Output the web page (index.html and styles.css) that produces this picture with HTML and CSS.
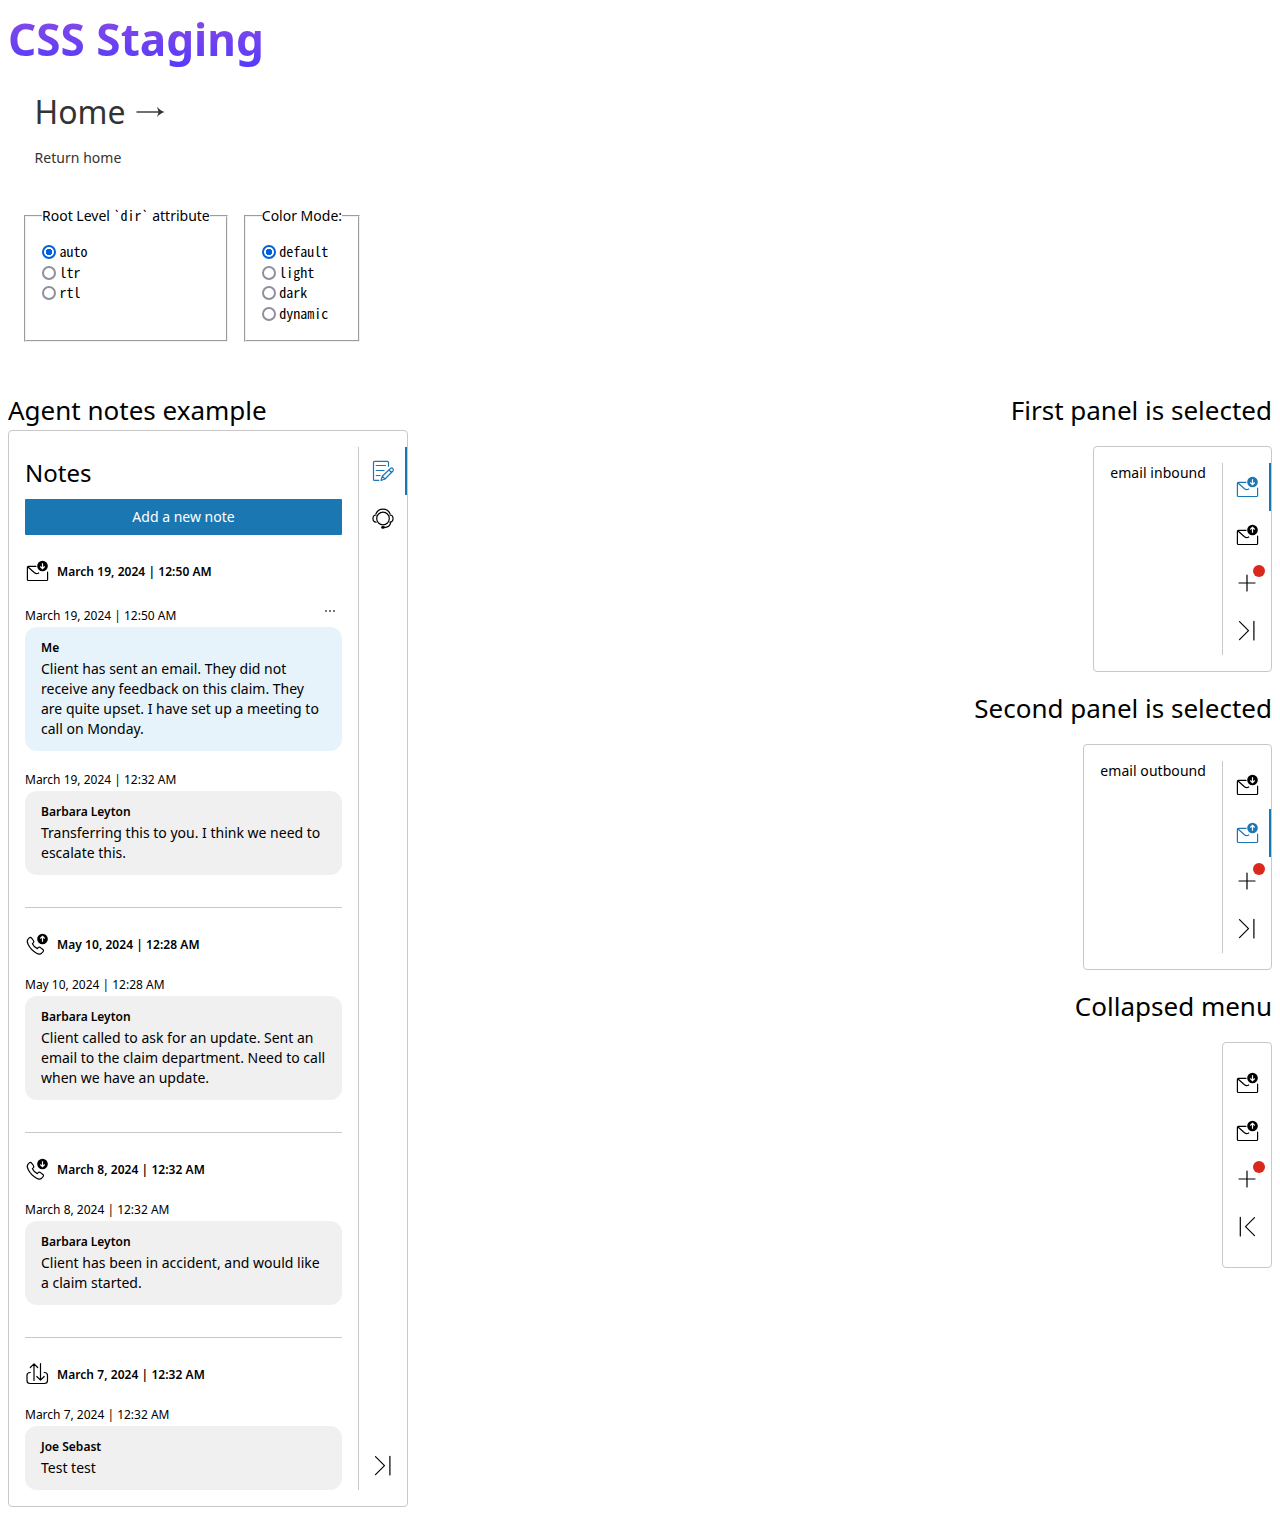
FILE: index.html
```html
<!DOCTYPE html>
<html lang="en">
<head>
<meta charset="utf-8">
<title>CSS Staging</title>
<link rel="stylesheet" href="styles.css">
</head>
<body>
<svg class="sprite" aria-hidden="true">
  <symbol id="envelope" viewBox="0 0 24 24">
    <path class="line" d="M11 7.4H3.4a1 1 0 0 0-1 1v12.1a1 1 0 0 0 1 1h18.2a1 1 0 0 0 1-1V13.2M2.7 7.8l6.8 6c1.6 1.3 2.6 1.3 4.2.2"/>
  </symbol>
  <symbol id="phone" viewBox="0 0 24 24">
    <path class="line" d="M4.3 5.9 2.9 7.3c-1.2 1.5-.6 3.4.3 5.2 1.9 3.9 4.6 6.6 8.4 8.7 2 1.1 3.7 1.2 5 0l1.3-1.3c.9-.9.8-1.7 0-2.4l-2.4-1.9c-.8-.6-1.6-.6-2.3.1l-.9.9c-2.2-1-3.900-2.800-4.900-4.900l.9-.9c.7-.7.7-1.500.1-2.300L6.600 6.100c-.7-.9-1.500-1-2.300-.2z"/>
  </symbol>
  <symbol id="badge-down" viewBox="0 0 24 24">
    <circle cx="17.5" cy="7" r="5.3" class="solid"/>
    <path class="knock" d="M17.5 4.2v5.3M15.3 7.5l2.2 2.200 2.200-2.200"/>
  </symbol>
  <symbol id="badge-up" viewBox="0 0 24 24">
    <circle cx="17.5" cy="7" r="5.3" class="solid"/>
    <path class="knock" d="M17.5 9.8V4.5M15.3 6.500l2.200-2.200 2.200 2.200"/>
  </symbol>
  <symbol id="transfer" viewBox="0 0 24 24">
    <path class="line" d="M5.300 10.500H5a3 3 0 0 0-3 3v5a3 3 0 0 0 3 3h14.500a3 3 0 0 0 3-3v-5a3 3 0 0 0-3-3h-.3M9 18.500V2M5.300 5.500 9 1.800l3.700 3.700M15.500 1.500V18M11.800 14.500l3.700 3.700 3.700-3.700"/>
  </symbol>
  <symbol id="note" viewBox="0 0 24 24">
    <path class="line" d="M17.500 7.200V3.400a1 1 0 0 0-1-1h-13a1 1 0 0 0-1 1v17a1 1 0 0 0 1 1h4.200M5.200 6.500h9.300M5.200 11.500h7.800M5.200 16.500h3.800M10 21.500l1.200-4.200 8.300-7.800c.8-.7 1.700-.6 2.400.1.700.7.700 1.600 0 2.400l-7.900 8zM18 11l2.700 2.700M11.200 17.300l2.800 2.700"/>
  </symbol>
  <symbol id="headset" viewBox="0 0 24 24">
    <circle class="line" cx="12" cy="11.500" r="6.300"/>
    <path class="line" d="M4.900 6.800C6.300 3.800 8.800 2.200 12 2.200s5.700 1.600 7.100 4.600M5.100 8c-4.200.1-4.200 7 0 7.200M18.900 8c4.200.1 4.200 7 0 7.200M19.800 15.300c-.8 3.500-2.900 5.100-6.300 5.100"/>
    <ellipse cx="12" cy="20.400" rx="1.900" ry="1.300" class="solid"/>
  </symbol>
  <symbol id="plus" viewBox="0 0 24 24"><path class="line" d="M12 4v16M4 12h16"/></symbol>
  <symbol id="collapse" viewBox="0 0 24 24"><path class="line" d="m4.500 2.600 9 9-9 9M18.900 2.300v18.700"/></symbol>
  <symbol id="expand" viewBox="0 0 24 24"><path class="line" d="m19.500 2.600-9 9 9 9M5.300 2.300v18.700"/></symbol>
</svg>

<h1 class="title">CSS Staging</h1>
<a class="home" href="#"><span class="home-title">Home <svg class="arrow" viewBox="0 0 30 12"><path d="M1.500 6h25" stroke="currentColor" stroke-width="1.400"/><path d="M22 .8c1.700 2.300 4 4 7.500 5.200-3.500 1.200-5.800 2.900-7.500 5.200l1.600-5.200z" fill="currentColor"/></svg></span><span class="home-sub">Return home</span></a>

<form class="settings">
  <fieldset class="group">
    <legend>Root Level <code>`dir`</code> attribute</legend>
    <label><input type="radio" name="dir" checked><code>auto</code></label>
    <label><input type="radio" name="dir"><code>ltr</code></label>
    <label><input type="radio" name="dir"><code>rtl</code></label>
  </fieldset>
  <fieldset class="group">
    <legend>Color Mode:</legend>
    <label><input type="radio" name="mode" checked><code>default</code></label>
    <label><input type="radio" name="mode"><code>light</code></label>
    <label><input type="radio" name="mode"><code>dark</code></label>
    <label><input type="radio" name="mode"><code>dynamic</code></label>
  </fieldset>
</form>

<main class="examples">
  <section class="agent">
    <h2 class="heading">Agent notes example</h2>
    <div class="card">
      <div class="panel notes">
        <h3 class="notes-title">Notes</h3>
        <button class="add" type="button">Add a new note</button>

        <section class="thread">
          <div class="thread-head"><svg class="icon"><use href="#envelope"/><use href="#badge-down"/></svg><span>March 19, 2024 | 12:50 AM</span></div>
          <div class="meta"><span>March 19, 2024 | 12:50 AM</span><button class="more" type="button" aria-label="More"><i></i><i></i><i></i></button></div>
          <div class="bubble mine"><b>Me</b><p>Client has sent an email. They did not receive any feedback on this claim. They are quite upset. I have set up a meeting to call on Monday.</p></div>
          <div class="meta"><span>March 19, 2024 | 12:32 AM</span></div>
          <div class="bubble"><b>Barbara Leyton</b><p>Transferring this to you. I think we need to escalate this.</p></div>
        </section>

        <section class="thread">
          <div class="thread-head"><svg class="icon"><use href="#phone"/><use href="#badge-up"/></svg><span>May 10, 2024 | 12:28 AM</span></div>
          <div class="meta"><span>May 10, 2024 | 12:28 AM</span></div>
          <div class="bubble"><b>Barbara Leyton</b><p>Client called to ask for an update. Sent an email to the claim department. Need to call when we have an update.</p></div>
        </section>

        <section class="thread">
          <div class="thread-head"><svg class="icon"><use href="#phone"/><use href="#badge-down"/></svg><span>March 8, 2024 | 12:32 AM</span></div>
          <div class="meta"><span>March 8, 2024 | 12:32 AM</span></div>
          <div class="bubble"><b>Barbara Leyton</b><p>Client has been in accident, and would like a claim started.</p></div>
        </section>

        <section class="thread">
          <div class="thread-head"><svg class="icon"><use href="#transfer"/></svg><span>March 7, 2024 | 12:32 AM</span></div>
          <div class="meta"><span>March 7, 2024 | 12:32 AM</span></div>
          <div class="bubble"><b>Joe Sebast</b><p>Test test</p></div>
        </section>
      </div>
      <nav class="tabs">
        <a class="tab active"><svg class="icon"><use href="#note"/></svg></a>
        <a class="tab"><svg class="icon"><use href="#headset"/></svg></a>
        <a class="tab last"><svg class="icon"><use href="#collapse"/></svg></a>
      </nav>
    </div>
  </section>

  <section class="variants">
    <h2 class="heading">First panel is selected</h2>
    <div class="card">
      <div class="panel">email inbound</div>
      <nav class="tabs">
        <a class="tab active"><svg class="icon"><use href="#envelope"/><use href="#badge-down"/></svg></a>
        <a class="tab"><svg class="icon"><use href="#envelope"/><use href="#badge-up"/></svg></a>
        <a class="tab alert"><svg class="icon"><use href="#plus"/></svg></a>
        <a class="tab"><svg class="icon"><use href="#collapse"/></svg></a>
      </nav>
    </div>
    <h2 class="heading">Second panel is selected</h2>
    <div class="card">
      <div class="panel">email outbound</div>
      <nav class="tabs">
        <a class="tab"><svg class="icon"><use href="#envelope"/><use href="#badge-down"/></svg></a>
        <a class="tab active"><svg class="icon"><use href="#envelope"/><use href="#badge-up"/></svg></a>
        <a class="tab alert"><svg class="icon"><use href="#plus"/></svg></a>
        <a class="tab"><svg class="icon"><use href="#collapse"/></svg></a>
      </nav>
    </div>
    <h2 class="heading">Collapsed menu</h2>
    <div class="card">
      <nav class="tabs bare">
        <a class="tab"><svg class="icon"><use href="#envelope"/><use href="#badge-down"/></svg></a>
        <a class="tab"><svg class="icon"><use href="#envelope"/><use href="#badge-up"/></svg></a>
        <a class="tab alert"><svg class="icon"><use href="#plus"/></svg></a>
        <a class="tab"><svg class="icon"><use href="#expand"/></svg></a>
      </nav>
    </div>
  </section>
</main>
</body>
</html>
```
FILE: styles.css
```css
* { box-sizing: border-box; }
body {
  margin: 8px;
  font: 14px/20px "Noto Sans", sans-serif;
  color: #000;
  background: #fff;
}
h1, h2, h3, p { margin: 0; font-weight: 400; }
code { font-family: "Noto Sans Mono CJK SC", "Noto Sans Mono CJK JP", "Noto Sans Mono", monospace; font-size: 14px; }
.sprite { display: none; }

.title {
  width: max-content;
  height: 64px;
  font-size: 44.100px;
  font-weight: 700;
  line-height: 62px;
  background: linear-gradient(#8f4de0, #5038ff);
  background-clip: text;
  -webkit-background-clip: text;
  color: transparent;
}
.home {
  display: flex;
  flex-direction: column;
  width: max-content;
  margin: 16px 0 0 26.500px;
  color: #333;
  text-decoration: none;
}
.home-title { font-size: 32px; line-height: 48px; }
.arrow { width: 30px; height: 12px; margin-left: 1px; vertical-align: 6px; fill: none; }
.home-sub { margin-top: 12px; letter-spacing: .04px; }

.settings { display: flex; gap: 16px; margin: 38px 0 0 16px; height: 136px; }
.group {
  display: flex;
  flex-direction: column;
  margin: 0;
  padding: 16px;
  border: 2px groove #f0f0f0;
}
.group legend { padding: 0; }
.group legend code { line-height: 1; }
.group label { display: flex; align-items: center; height: 20.500px; }
.group label code { padding-bottom: 2px; }
.group input {
  appearance: none;
  width: 14px;
  height: 14px;
  margin: 0 3.500px 0 0;
  border: 2px solid #8f8f9d;
  border-radius: 50%;
}
.group input:checked {
  border-color: #0060df;
  background: radial-gradient(circle, #0060df 0 2.900px, #fff 3.500px);
}

.examples { display: flex; justify-content: space-between; margin-top: 48px; }
.heading { font-size: 26px; line-height: 40px; }
.agent { width: 400px; }
.variants { display: flex; flex-direction: column; align-items: flex-end; gap: 16px; }
.variants .panel { letter-spacing: .06px; }
.card {
  display: flex;
  padding: 16px 0;
  border: 1px solid #c8c8c8;
  border-radius: 4px;
}
.panel { padding: 0 16px; }
.notes { flex: 1; }
.tabs {
  display: flex;
  flex-direction: column;
  width: 49px;
  border-left: 1px solid #c8c8c8;
}
.tabs.bare { width: 48px; border-left: 0; }
.tab { position: relative; display: grid; place-items: center; height: 48px; }
.tab.active { color: #1b77b2; box-shadow: inset -2px 0 #1b77b2; }
.tab.last { margin-top: auto; }
.tab.alert::after {
  content: "";
  position: absolute;
  top: 6px;
  right: 6px;
  width: 12px;
  height: 12px;
  border-radius: 50%;
  background: #da291c;
}
.icon { display: block; flex: none; width: 24px; height: 24px; }
.line { fill: none; stroke: currentColor; stroke-width: 1.200; stroke-linecap: round; stroke-linejoin: round; }
.solid { fill: currentColor; }
.knock { fill: none; stroke: #fff; stroke-width: 1.200; }

.notes-title { font-size: 24px; line-height: 32px; padding: 10px 0; }
.add {
  display: block;
  width: 100%;
  height: 36px;
  border: 0;
  border-radius: 1px;
  background: #1b77b2;
  color: #fff;
  font: inherit;
}
.thread { padding-top: 24px; }
.thread + .thread { margin-top: 32px; border-top: 1px solid #c8c8c8; }
.thread-head {
  display: flex;
  align-items: center;
  gap: 8px;
  height: 24px;
  font-size: 12px;
  font-weight: 600;
  letter-spacing: .05px;
}
.thread-head span { padding-top: 2px; }
.meta {
  display: flex;
  justify-content: space-between;
  align-items: flex-end;
  min-height: 20px;
  margin: 16px 0 4px;
  font-size: 12px;
  line-height: 16px;
}
.meta span { line-height: 14px; }
.more {
  display: flex;
  align-items: center;
  justify-content: center;
  gap: 2px;
  width: 24px;
  height: 24px;
  padding: 0;
  border: 0;
  background: none;
}
.more i { width: 2px; height: 2px; background: #777; }
.bubble { padding: 13px 16px 12px; border-radius: 12px; background: #f0f0f0; }
.bubble.mine { background: #e6f3fb; }
.bubble b { display: block; margin-bottom: 3px; font-size: 12px; font-weight: 600; line-height: 16px; }
```
